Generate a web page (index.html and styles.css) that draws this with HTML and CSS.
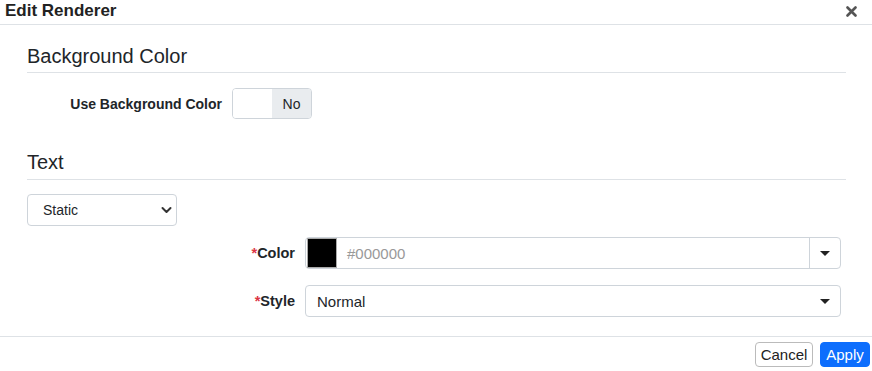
FILE: index.html
```html
<!DOCTYPE html>
<html lang="en">
<head>
  <meta charset="UTF-8">
  <title>Edit Renderer</title>
  <link rel="stylesheet" href="styles.css">
</head>
<body>

  <!-- HEADER -->
  <div class="header">
    <span class="title">Edit Renderer</span>
    <svg class="close" width="11" height="11" viewBox="0 0 11 11">
      <path d="M1.5 1.5 L9.5 9.5 M9.5 1.5 L1.5 9.5" stroke="#555" stroke-width="2.6" stroke-linecap="round"/>
    </svg>
  </div>

  <!-- CONTENT -->
  <div class="content">
    <h2 class="section-title">Background Color</h2>
    <div class="row row-bg">
      <label class="label label-narrow">Use Background Color</label>
      <div class="toggle">
        <span class="toggle-off"></span>
        <span class="toggle-on">No</span>
      </div>
    </div>

    <h2 class="section-title section-text">Text</h2>
    <div class="mode">
      <span>Static</span>
      <svg width="11" height="8" viewBox="0 0 11 8">
        <path d="M1.5 2 L5.5 6 L9.5 2" fill="none" stroke="#333" stroke-width="2" stroke-linecap="round" stroke-linejoin="round"/>
      </svg>
    </div>

    <div class="row row-color">
      <label class="label"><span class="req">*</span>Color</label>
      <div class="control color-group">
        <span class="swatch"></span>
        <span class="placeholder">#000000</span>
        <span class="drop"><i class="caret"></i></span>
      </div>
    </div>

    <div class="row row-style">
      <label class="label"><span class="req">*</span>Style</label>
      <div class="control style-select">
        <span>Normal</span>
        <i class="caret"></i>
      </div>
    </div>
  </div>

  <!-- FOOTER -->
  <div class="footer">
    <button class="btn btn-cancel">Cancel</button>
    <button class="btn btn-apply">Apply</button>
  </div>

</body>
</html>
```

FILE: styles.css
```css
:root {
  --text-color: #212529;
  --border-color: #dee2e6;
  --input-border: #ced4da;
  --accent-color: #0d6efd;
}
body {
  font-family: 'Liberation Sans', Arial, sans-serif;
  font-size: 14px;
  margin: 0;
  padding: 0;
  color: var(--text-color);
  background: #fff;
}
.header {
  height: 24px;
  padding: 0 15px 0 5px;
  border-bottom: 1px solid var(--border-color);
  display: flex;
  align-items: center;
  justify-content: space-between;
}
.title {
  font-size: 17px;
  font-weight: bold;
  color: #222;
  margin-top: -2px;
}
.close {
  margin-top: -1px;
}
.content {
  display: flow-root;
  height: 311px;
  padding: 0 26px 0 27px;
}
.section-title {
  font-size: 20px;
  font-weight: normal;
  line-height: 24px;
  margin: 19px 0 0;
  padding-bottom: 4px;
  border-bottom: 1px solid var(--border-color);
}
.section-text {
  margin-top: 31px;
  padding-bottom: 5px;
}
.row {
  display: flex;
  align-items: center;
  gap: 10px;
  padding-right: 5px;
}
.row-bg {
  margin-top: 15px;
}
.row-color {
  margin-top: 11px;
}
.row-style {
  margin-top: 16px;
}
.label {
  width: 268px;
  text-align: right;
  font-weight: bold;
  font-size: 14.5px;
}
.label-narrow {
  width: 195px;
  font-size: 14px;
}
.req {
  color: #dc3545;
}
.toggle {
  display: flex;
  width: 78px;
  height: 29px;
  border: 1px solid var(--input-border);
  border-radius: 4px;
  overflow: hidden;
}
.toggle-off {
  width: 39px;
  background: #fff;
}
.toggle-on {
  flex: 1;
  background: #e9ecef;
  display: flex;
  align-items: center;
  justify-content: center;
  font-size: 14px;
}
.mode {
  margin-top: 14px;
  width: 150px;
  height: 32px;
  box-sizing: border-box;
  border: 1px solid var(--input-border);
  border-radius: 4px;
  display: flex;
  align-items: center;
  justify-content: space-between;
  padding: 0 4px 0 15px;
}
.control {
  flex: 1;
  height: 32px;
  box-sizing: border-box;
  border: 1px solid var(--input-border);
  border-radius: 4px;
  display: flex;
  align-items: center;
}
.color-group {
  padding-left: 1px;
}
.swatch {
  width: 30px;
  height: 30px;
  background: #000;
  border: 1px solid #aaa;
  box-sizing: border-box;
}
.placeholder {
  flex: 1;
  color: #999;
  padding-left: 10px;
  font-size: 15px;
}
.drop {
  width: 30px;
  height: 100%;
  border-left: 1px solid var(--input-border);
  display: flex;
  align-items: center;
  justify-content: center;
}
.caret {
  width: 0;
  height: 0;
  border-left: 5px solid transparent;
  border-right: 5px solid transparent;
  border-top: 5px solid #222;
}
.style-select {
  justify-content: space-between;
  padding: 0 10px 0 11px;
  font-size: 15px;
}
.footer {
  border-top: 1px solid var(--border-color);
  height: 34px;
  display: flex;
  justify-content: flex-end;
  align-items: flex-start;
  gap: 7px;
  padding-right: 2px;
}
.btn {
  margin-top: 5px;
  height: 25px;
  font-family: inherit;
  font-size: 15px;
  padding: 0;
  border-radius: 4px;
  cursor: pointer;
}
.btn-cancel {
  width: 58px;
  background: #fff;
  border: 1px solid #bbb;
  color: #222;
}
.btn-apply {
  width: 50px;
  background: var(--accent-color);
  border: 1px solid var(--accent-color);
  color: #fff;
}
```
